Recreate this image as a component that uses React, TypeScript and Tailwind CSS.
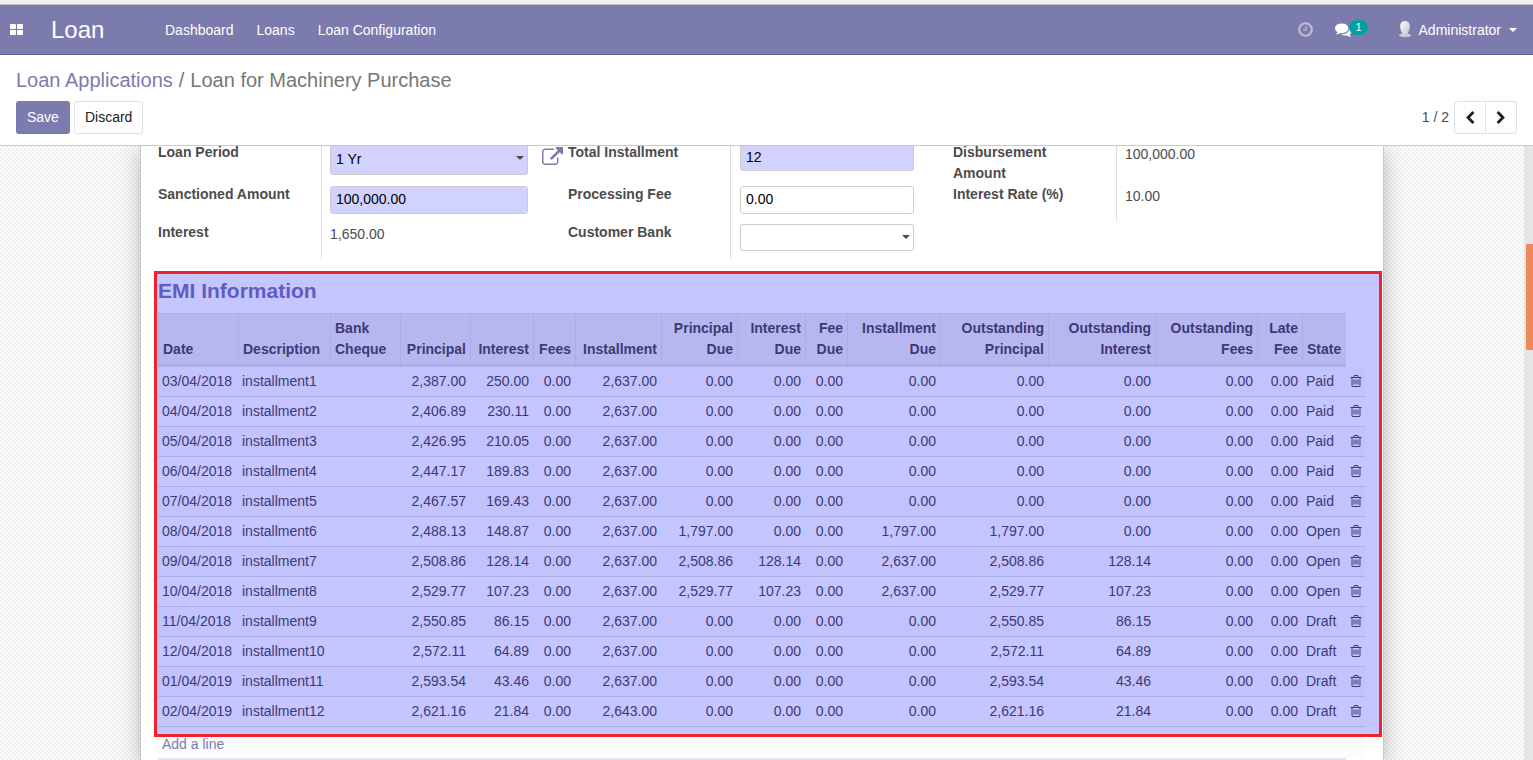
import React from "react";

const PATHS = {
  comments:
    "M1408 768q0 139-94 257t-256.500 186.500-353.500 68.500q-86 0-176-16-124 88-278 128-36 9-86 16h-3q-11 0-20.500-8t-11.500-21q-1-3-1-6.500t.5-6.500 2-6l2.500-5 3.500-5.500 4-5 4.500-5 4-4.500q5-6 23-25t26-29.500 22.500-29 25-38.500 20.500-44q-124-72-195-177t-71-224q0-139 94-257t256.500-186.500 353.500-68.500 353.500 68.500 256.500 186.500 94 257zm384 256q0 120-71 224.500t-195 176.500q10 24 20.500 44t25 38.500 22.500 29 26 29.500 23 25q1 1 4 4.500t4.500 5 4 5 3.500 5.500l2.500 5 2 6 .5 6.500-1 6.500q-3 14-13 22t-22 7q-50-7-86-16-154-40-278-128-90 16-176 16-271 0-472-132 58 4 88 4 161 0 309-45t264-129q125-92 192-212t67-254q0-77-23-152 129 71 204 178t75 230z",
  external:
    "M1408 928v320q0 119-84.500 203.500t-203.500 84.500h-832q-119 0-203.500-84.500t-84.500-203.500v-832q0-119 84.500-203.500t203.500-84.500h704q14 0 23 9t9 23v64q0 14-9 23t-23 9h-704q-66 0-113 47t-47 113v832q0 66 47 113t113 47h832q66 0 113-47t47-113v-320q0-14 9-23t23-9h64q14 0 23 9t9 23zm384-864v512q0 26-19 45t-45 19-45-19l-176-176-652 652q-10 10-23 10t-23-10l-114-114q-10-10-10-23t10-23l652-652-176-176q-19-19-19-45t19-45 45-19h512q26 0 45 19t19 45z",
  clock:
    "M1024 544v448q0 14-9 23t-23 9h-320q-14 0-23-9t-9-23v-64q0-14 9-23t23-9h224v-352q0-14 9-23t23-9h64q14 0 23 9t9 23zm416 352q0-148-73-273t-198-198-273-73-273 73-198 198-73 273 73 273 198 198 273 73 273-73 198-198 73-273zm224 0q0 209-103 385.500t-279.500 279.500-385.500 103-385.500-103-279.500-279.500-103-385.500 103-385.500 279.500-279.500 385.500-103 385.500 103 279.500 279.500 103 385.500z",
  trash:
    "M704 736v576q0 14-9 23t-23 9h-64q-14 0-23-9t-9-23v-576q0-14 9-23t23-9h64q14 0 23 9t9 23zm256 0v576q0 14-9 23t-23 9h-64q-14 0-23-9t-9-23v-576q0-14 9-23t23-9h64q14 0 23 9t9 23zm256 0v576q0 14-9 23t-23 9h-64q-14 0-23-9t-9-23v-576q0-14 9-23t23-9h64q14 0 23 9t9 23zm128 724v-948h-896v948q0 22 7 40.500t14.500 27 10.500 8.500h832q3 0 10.500-8.500t14.500-27 7-40.500zm-672-1076h448l-48-117q-7-9-17-11h-317q-10 2-17 11zm928 32v64q0 14-9 23t-23 9h-96v948q0 83-47 143.500t-113 60.500h-832q-66 0-113-58.500t-47-141.500v-952h-96q-14 0-23-9t-9-23v-64q0-14 9-23t23-9h309l70-167q15-37 54-63t79-26h320q40 0 79 26t54 63l70 167h309q14 0 23 9t9 23z",
  left: "M1427 301l-531 531 531 531q19 19 19 45t-19 45l-166 166q-19 19-45 19t-45-19l-742-742q-19-19-19-45t19-45l742-742q19-19 45-19t45 19l166 166q19 19 19 45t-19 45z",
  right:
    "M1363 877l-742 742q-19 19-45 19t-45-19l-166-166q-19-19-19-45t19-45l531-531-531-531q-19-19-19-45t19-45l166-166q19-19 45-19t45 19l742 742q19 19 19 45t-19 45z",
};

function Icon({ name, className }: { name: keyof typeof PATHS; className: string }) {
  return (
    <svg viewBox="0 0 1792 1792" fill="currentColor" aria-hidden="true" className={className}>
      <path d={PATHS[name]} />
    </svg>
  );
}

function Caret({ className }: { className: string }) {
  return (
    <svg viewBox="0 0 8 4" fill="currentColor" aria-hidden="true" className={className}>
      <path d="M0 0h8L4 4z" />
    </svg>
  );
}

function Avatar() {
  return (
    <svg viewBox="0 0 14 17" aria-hidden="true" className="h-[17px] w-[14px]">
      <defs>
        <linearGradient id="head" x1="0" y1="0" x2="1" y2="1">
          <stop offset="0" stopColor="#fafafa" />
          <stop offset="1" stopColor="#c4c8cc" />
        </linearGradient>
      </defs>
      <path d="M1 14.500c0-1.500 2-2 4.500-2.500h3c2.500.5 4.500 1 4.500 2.500-1 2.300-11 2.300-12 0z" fill="#c9cbd2" />
      <path d="M7 0c3.200 0 4.900 2.300 4.800 5.500C11.700 9 10 13.500 7 13.500S2.300 9 2.200 5.500C2.100 2.300 3.800 0 7 0z" fill="url(#head)" />
    </svg>
  );
}

type Row = string[];

const ROWS: Row[] = [
  ["03/04/2018", "installment1", "", "2,387.00", "250.00", "0.00", "2,637.00", "0.00", "0.00", "0.00", "0.00", "0.00", "0.00", "0.00", "0.00", "Paid"],
  ["04/04/2018", "installment2", "", "2,406.89", "230.11", "0.00", "2,637.00", "0.00", "0.00", "0.00", "0.00", "0.00", "0.00", "0.00", "0.00", "Paid"],
  ["05/04/2018", "installment3", "", "2,426.95", "210.05", "0.00", "2,637.00", "0.00", "0.00", "0.00", "0.00", "0.00", "0.00", "0.00", "0.00", "Paid"],
  ["06/04/2018", "installment4", "", "2,447.17", "189.83", "0.00", "2,637.00", "0.00", "0.00", "0.00", "0.00", "0.00", "0.00", "0.00", "0.00", "Paid"],
  ["07/04/2018", "installment5", "", "2,467.57", "169.43", "0.00", "2,637.00", "0.00", "0.00", "0.00", "0.00", "0.00", "0.00", "0.00", "0.00", "Paid"],
  ["08/04/2018", "installment6", "", "2,488.13", "148.87", "0.00", "2,637.00", "1,797.00", "0.00", "0.00", "1,797.00", "1,797.00", "0.00", "0.00", "0.00", "Open"],
  ["09/04/2018", "installment7", "", "2,508.86", "128.14", "0.00", "2,637.00", "2,508.86", "128.14", "0.00", "2,637.00", "2,508.86", "128.14", "0.00", "0.00", "Open"],
  ["10/04/2018", "installment8", "", "2,529.77", "107.23", "0.00", "2,637.00", "2,529.77", "107.23", "0.00", "2,637.00", "2,529.77", "107.23", "0.00", "0.00", "Open"],
  ["11/04/2018", "installment9", "", "2,550.85", "86.15", "0.00", "2,637.00", "0.00", "0.00", "0.00", "0.00", "2,550.85", "86.15", "0.00", "0.00", "Draft"],
  ["12/04/2018", "installment10", "", "2,572.11", "64.89", "0.00", "2,637.00", "0.00", "0.00", "0.00", "0.00", "2,572.11", "64.89", "0.00", "0.00", "Draft"],
  ["01/04/2019", "installment11", "", "2,593.54", "43.46", "0.00", "2,637.00", "0.00", "0.00", "0.00", "0.00", "2,593.54", "43.46", "0.00", "0.00", "Draft"],
  ["02/04/2019", "installment12", "", "2,621.16", "21.84", "0.00", "2,643.00", "0.00", "0.00", "0.00", "0.00", "2,621.16", "21.84", "0.00", "0.00", "Draft"],
];

const COLUMNS = [
  { title: "Date", width: "w-[80px]", align: "text-left" },
  { title: "Description", width: "w-[92px]", align: "text-left" },
  { title: "Bank Cheque", width: "w-[70px]", align: "text-left" },
  { title: "Principal", width: "w-[70px]", align: "text-right" },
  { title: "Interest", width: "w-[63px]", align: "text-right" },
  { title: "Fees", width: "w-[42px]", align: "text-right" },
  { title: "Installment", width: "w-[86px]", align: "text-right" },
  { title: "Principal Due", width: "w-[76px]", align: "text-right" },
  { title: "Interest Due", width: "w-[68px]", align: "text-right" },
  { title: "Fee Due", width: "w-[42px]", align: "text-right" },
  { title: "Installment Due", width: "w-[93px]", align: "text-right" },
  { title: "Outstanding Principal", width: "w-[108px]", align: "text-right" },
  { title: "Outstanding Interest", width: "w-[107px]", align: "text-right" },
  { title: "Outstanding Fees", width: "w-[102px]", align: "text-right" },
  { title: "Late Fee", width: "w-[45px]", align: "text-right" },
  { title: "State", width: "w-[44px]", align: "text-left" },
];

function NavBar() {
  return (
    <header className="flex h-[55px] shrink-0 items-center border-t-4 border-b border-t-[#f2f1f0] border-b-[#5f5e97] bg-[#7c7bad] text-white">
      <div className="flex h-full w-full items-center border-t border-[#c4c2c0]">
        <button type="button" aria-label="Applications" className="ml-[10px]">
          <svg viewBox="0 0 13 11" fill="currentColor" className="h-[11px] w-[13px]">
            <rect width="6" height="5" rx="0.800" />
            <rect x="7" width="6" height="5" rx="0.800" />
            <rect y="6" width="6" height="5" rx="0.800" />
            <rect x="7" y="6" width="6" height="5" rx="0.800" />
          </svg>
        </button>
        <a href="#" className="ml-7 w-[114px] text-2xl">
          Loan
        </a>
        <nav className="flex gap-[23px] pt-[2px]">
          <a href="#">Dashboard</a>
          <a href="#">Loans</a>
          <a href="#">Loan Configuration</a>
        </nav>
        <div className="ml-auto flex items-center pr-4">
          <button type="button" aria-label="Activities" className="mr-[21px] opacity-50">
            <Icon name="clock" className="size-[17px]" />
          </button>
          <button type="button" aria-label="Messages" className="mr-[30px] flex items-center">
            <Icon name="comments" className="size-[17px]" />
            <span className="-ml-[3px] mb-[5px] rounded-full bg-[#00a09d] px-[6px] text-[11px] leading-[15px]">1</span>
          </button>
          <button type="button" className="flex items-center">
            <Avatar />
            <span className="mr-2 ml-[7px] pt-[2px]">Administrator</span>
            <Caret className="h-1 w-2" />
          </button>
        </div>
      </div>
    </header>
  );
}

function ControlPanel() {
  return (
    <div className="flex h-[91px] shrink-0 flex-col border-b border-[#c9c9c9] bg-white px-4 pt-[10px]">
      <h1 className="text-[20px] leading-[30px] text-[#777777]">
        <a href="#" className="text-[#7c7bad]">
          Loan Applications
        </a>
        <span className="px-[6px]">/</span>
        Loan for Machinery Purchase
      </h1>
      <div className="mt-[6px] flex items-center gap-1">
        <button type="button" className="h-[33px] rounded-[3px] bg-[#7c7bad] px-[11px] text-white">
          Save
        </button>
        <button type="button" className="h-[33px] rounded-[3px] border border-[#dee0e5] bg-white px-[10px] text-[#212121]">
          Discard
        </button>
        <span className="mr-px ml-auto">1 / 2</span>
        <div className="flex">
          <button type="button" aria-label="Previous" className="flex h-[33px] w-8 items-center justify-center rounded-l-[3px] border border-[#dee0e5] text-[#1f1f2e]">
            <Icon name="left" className="size-[14px]" />
          </button>
          <button type="button" aria-label="Next" className="flex h-[33px] w-[31px] items-center justify-center rounded-r-[3px] border border-l-0 border-[#dee0e5] text-[#1f1f2e]">
            <Icon name="right" className="size-[14px]" />
          </button>
        </div>
      </div>
    </div>
  );
}

const labelClass = "border-r border-[#dddddd] pr-6 font-bold leading-[21px]";
const inputClass = "block w-full rounded-[3px] border border-[#cccccc] px-[5px] text-black outline-none";

function FormGroups() {
  return (
    <div className="-mt-1 flex px-[17px]">
      <div className="grid w-[410px] grid-cols-[164px_1fr] grid-rows-[42px_38px_37px]">
        <label htmlFor="period" className={labelClass}>Loan Period</label>
        <div className="flex pl-2">
          <div className="relative w-[198px]">
            <select id="period" className={`${inputClass} h-[33px] appearance-none bg-[#d2d2ff] pt-[2px]`}>
              <option>1 Yr</option>
            </select>
            <Caret className="pointer-events-none absolute top-[14px] right-1 h-1 w-2" />
          </div>
          <button type="button" aria-label="External link" className="mt-[5px] ml-[14px] self-start text-[#7c7bad]">
            <Icon name="external" className="size-[21px]" />
          </button>
        </div>
        <label htmlFor="sanctioned" className={labelClass}>Sanctioned Amount</label>
        <div className="pt-[2px] pl-2">
          <input id="sanctioned" defaultValue="100,000.00" className={`${inputClass} h-7 max-w-[198px] bg-[#d2d2ff] pb-[2px]`} />
        </div>
        <span className={labelClass}>Interest</span>
        <span className="pt-[2px] pl-2 leading-[21px]">1,650.00</span>
      </div>

      <div className="grid w-[385px] grid-cols-[163px_1fr] grid-rows-[42px_38px_37px]">
        <label htmlFor="total" className={labelClass}>Total Installment</label>
        <div className="pl-[9px]">
          <input id="total" defaultValue="12" className={`${inputClass} h-[29px] max-w-[174px] bg-[#d2d2ff]`} />
        </div>
        <label htmlFor="fee" className={labelClass}>Processing Fee</label>
        <div className="pt-[2px] pl-[9px]">
          <input id="fee" defaultValue="0.00" className={`${inputClass} h-7 max-w-[174px] bg-white pb-[2px]`} />
        </div>
        <label htmlFor="bank" className={labelClass}>Customer Bank</label>
        <div className="pt-[2px] pl-[9px]">
          <div className="relative max-w-[174px]">
            <select id="bank" className={`${inputClass} h-[27px] appearance-none bg-white`}>
              <option></option>
            </select>
            <Caret className="pointer-events-none absolute top-[11px] right-1 h-1 w-2" />
          </div>
        </div>
      </div>

      <div className="grid flex-1 grid-cols-[164px_1fr] grid-rows-[42px_37px] self-start">
        <span className={labelClass}>Disbursement Amount</span>
        <span className="pt-[2px] pl-2 leading-[21px]">100,000.00</span>
        <span className={labelClass}>Interest Rate (%)</span>
        <span className="pt-[2px] pl-2 leading-[21px]">10.00</span>
      </div>
    </div>
  );
}

function EmiSection() {
  return (
    <section className="relative z-10 mt-3 mr-px ml-[13px] border-3 border-[#f0222b] bg-[#c5c5ff] pr-[14px] pb-[7px] pl-px text-[#3c3a76]">
      <h2 className="h-[39px] pt-[2px] text-[21px] leading-[30px] font-bold text-[#5f5ebf]">EMI Information</h2>
      <table className="w-full table-fixed border-separate border-spacing-0">
        <colgroup>
          {COLUMNS.map((c) => (
            <col key={c.title} className={c.width} />
          ))}
          <col className="w-[19px]" />
        </colgroup>
        <thead>
          <tr>
            {COLUMNS.map((c) => (
              <th
                key={c.title}
                scope="col"
                className={`border-t border-b-3 border-l border-[#acace6] bg-[#b7b7f0] px-1 pt-1 pb-1 align-bottom leading-[21px] ${c.align}`}
              >
                {c.title}
              </th>
            ))}
            <td></td>
          </tr>
        </thead>
        <tbody>
          {ROWS.map((row) => (
            <tr key={row[1]} className="odd:bg-[#c2c2fc]">
              {row.map((cell, i) => (
                <td key={i} className={`h-[30px] border-b border-[#acace6] px-1 leading-[21px] whitespace-nowrap ${COLUMNS[i].align}`}>
                  {cell}
                </td>
              ))}
              <td className="h-[30px] border-b border-[#acace6] pb-[2px] pl-[3px]">
                <button type="button" aria-label={`Delete ${row[1]}`} className="block">
                  <Icon name="trash" className="size-[14px]" />
                </button>
              </td>
            </tr>
          ))}
        </tbody>
      </table>
    </section>
  );
}

export default function App() {
  return (
    <div className="flex h-screen flex-col overflow-hidden font-['Liberation_Sans',Arial,sans-serif] text-[14px] leading-[21px] text-[#4c4c4c]">
      <NavBar />
      <ControlPanel />
      <div className="flex min-h-0 flex-1">
        <main className="min-w-0 flex-1 overflow-hidden bg-[conic-gradient(#f0f0f0_25%,#fbfbfb_0_50%,#f0f0f0_0_75%,#fbfbfb_0)] bg-size-[4px_4px]">
          <div className="mx-auto flow-root min-h-full w-full max-w-[1244px] border-x border-[#c8c8d3] bg-white shadow-[0_5px_20px_0_rgba(0,0,0,0.25)]">
            <FormGroups />
            <EmiSection />
            <div className="mr-[18px] ml-[17px] bg-[#fcfcfc]">
              <a href="#" className="-mt-1 block pt-px pb-[3px] pl-1 text-[#7c7bad]">
                Add a line
              </a>
            </div>
            <div className="mr-[37px] ml-[17px] h-[3px] bg-[#e4e4e8]"></div>
          </div>
        </main>
        <div className="w-[9px] bg-[#e5e5e5] pt-[98px] pl-[2px]">
          <div className="h-[106px] rounded-l-[1px] bg-[#f0885e]"></div>
        </div>
      </div>
    </div>
  );
}
